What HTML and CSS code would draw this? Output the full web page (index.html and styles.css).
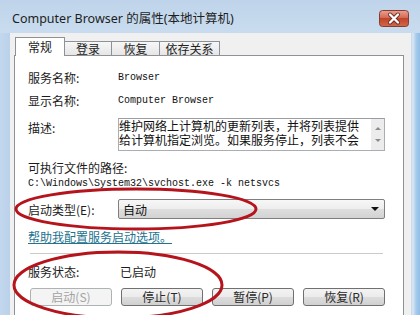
FILE: index.html
```html
<!DOCTYPE html>
<html>
<head>
  <meta charset="utf-8">
  <meta name="viewport" content="width=device-width, initial-scale=1.0"/>
  <title>Computer Browser 的属性</title>
  <link rel="stylesheet" href="styles.css">
</head>
<body>

  <div class="window">
    <div class="titlebar">
      <span class="title">Computer Browser 的属性(本地计算机)</span>
      <div class="close">
        <svg width="30" height="17" viewBox="0 0 30 17">
          <defs>
            <linearGradient id="red" x1="0" y1="0" x2="0" y2="1">
              <stop offset="0" stop-color="#e9a292"/>
              <stop offset="0.45" stop-color="#d46a55"/>
              <stop offset="0.5" stop-color="#c24328"/>
              <stop offset="1" stop-color="#cf6a4e"/>
            </linearGradient>
          </defs>
          <rect x="0.5" y="0.5" width="29" height="16" rx="3" fill="url(#red)" stroke="#8a3b2f"/>
          <path d="M11 4.5 L19 12.5 M19 4.5 L11 12.5" stroke="#6e2a22" stroke-width="4" stroke-linecap="round"/>
          <path d="M11 4.5 L19 12.5 M19 4.5 L11 12.5" stroke="#ffffff" stroke-width="2.4" stroke-linecap="round"/>
        </svg>
      </div>
    </div>

    <div class="client">
      <div class="tabs">
        <div class="tab active">常规</div>
        <div class="tab tab-login">登录</div>
        <div class="tab tab-recover">恢复</div>
        <div class="tab tab-deps">依存关系</div>
      </div>

      <div class="panel">
        <div class="field">
          <span class="label">服务名称:</span>
          <span class="mono">Browser</span>
        </div>
        <div class="field">
          <span class="label">显示名称:</span>
          <span class="mono">Computer Browser</span>
        </div>
        <div class="field field-desc">
          <span class="label label-top">描述:</span>
          <div class="desc">
            <div class="desc-text">
              <div>维护网络上计算机的更新列表，并将列表提供</div>
              <div>给计算机指定浏览。如果服务停止，列表不会</div>
            </div>
            <div class="scroll">
              <span class="arrow-up"></span>
              <span class="arrow-down"></span>
            </div>
          </div>
        </div>

        <div class="line path-label">可执行文件的路径:</div>
        <div class="line mono">C:\Windows\System32\svchost.exe -k netsvcs</div>

        <div class="field field-type">
          <span class="label">启动类型(E):</span>
          <div class="select">
            <span>自动</span>
            <span class="caret"></span>
          </div>
        </div>

        <div class="line help"><a href="#">帮助我配置服务启动选项。</a></div>

        <div class="divider"></div>

        <div class="line status">
          <span class="label">服务状态:</span>
          <span>已启动</span>
        </div>

        <div class="buttons">
          <button disabled>启动(S)</button>
          <button>停止(T)</button>
          <button>暂停(P)</button>
          <button>恢复(R)</button>
        </div>
      </div>
    </div>
  </div>

  <svg class="marks" width="420" height="315" viewBox="0 0 420 315">
    <ellipse cx="136" cy="209" rx="120" ry="20" fill="none" stroke="#b5141c" stroke-width="3"/>
    <ellipse cx="118" cy="285" rx="104" ry="33" fill="none" stroke="#b5141c" stroke-width="3"/>
  </svg>

</body>
</html>
```

FILE: styles.css
```css
* {
  box-sizing: border-box;
}
body {
  margin: 0;
  width: 420px;
  height: 315px;
  overflow: hidden;
  position: relative;
  font-family: "Noto Sans CJK SC", sans-serif;
  font-size: 12px;
  color: #1c1c1c;
}
.window {
  display: flex;
  flex-direction: column;
  height: 315px;
  background: linear-gradient(90deg, #c3d8ee 0, #b9d1ea 10px, #c3d8ed 411px, #dbe7f3 413px, #a7cbea 416px, #8fbde6 420px);
}
.titlebar {
  height: 33px;
  display: flex;
  align-items: flex-start;
  justify-content: space-between;
  padding: 0 11px 0 12px;
  background: linear-gradient(#bfd4ea, #c9dcef);
}
.title {
  margin-top: 10px;
  line-height: 18px;
  font-family: "Noto Sans", "Noto Sans CJK SC", sans-serif;
  font-size: 12.5px;
  color: #1e1e1e;
}
.close {
  margin-top: 10px;
  height: 17px;
}
.close svg {
  display: block;
}
.client {
  flex: 1;
  margin: 0 9px 0 10px;
  padding: 4px 7px 0 4px;
  background: #f0f0f0;
  display: flex;
  flex-direction: column;
  overflow: hidden;
}
.tabs {
  display: flex;
  align-items: flex-end;
  height: 19px;
  margin-bottom: -1px;
  padding-left: 1px;
  position: relative;
  z-index: 1;
}
.tab {
  height: 14px;
  margin-bottom: 1px;
  margin-left: -1px;
  border: 1px solid #8e9196;
  border-bottom: none;
  background: linear-gradient(#f7f7f7, #e6e6e6);
  text-align: center;
  line-height: 13px;
  color: #222;
}
.tab.active {
  width: 50px;
  height: 19px;
  margin-left: 0;
  margin-bottom: 0;
  background: #fff;
  line-height: 17px;
}
.tab-login {
  width: 48px;
}
.tab-recover {
  width: 49px;
}
.tab-deps {
  width: 61px;
}
.panel {
  flex: none;
  height: 300px;
  background: #fff;
  border: 1px solid #8e9196;
  padding: 10px 0 0 13px;
}
.field {
  display: flex;
  align-items: center;
  height: 23px;
}
.label {
  width: 90px;
  flex: none;
}
.mono {
  font-family: "Liberation Mono", monospace;
  font-size: 10px;
  color: #111;
}
.field-desc {
  height: auto;
  align-items: flex-start;
  margin-top: 6px;
}
.label-top {
  line-height: 16px;
  padding-top: 2px;
}
.desc {
  width: 267px;
  height: 33px;
  display: flex;
  border: 1px solid #abadb3;
  border-top-color: #9a9ca2;
}
.desc-text {
  flex: 1;
  line-height: 14px;
  white-space: nowrap;
  color: #111;
}
.scroll {
  width: 13px;
  display: flex;
  flex-direction: column;
  justify-content: space-around;
  align-items: center;
  background: #ececec;
  padding: 3px 0;
}
.arrow-up,
.arrow-down {
  width: 0;
  height: 0;
  border-left: 3px solid transparent;
  border-right: 3px solid transparent;
}
.arrow-up {
  border-bottom: 3px solid #8b8b8b;
}
.arrow-down {
  border-top: 3px solid #8b8b8b;
}
.line {
  line-height: 16px;
}
.path-label {
  margin-top: 9px;
}
.field-type {
  height: 20px;
  margin-top: 7px;
}
.select {
  width: 267px;
  height: 20px;
  display: flex;
  align-items: center;
  justify-content: space-between;
  padding: 0 5px 0 4px;
  border: 1px solid #7f7f7f;
  border-radius: 2px;
  background: linear-gradient(#f7f7f7, #ededed 50%, #dedede 51%, #d3d3d3);
  color: #111;
}
.caret {
  width: 0;
  height: 0;
  border-left: 4px solid transparent;
  border-right: 4px solid transparent;
  border-top: 4px solid #111;
}
.help {
  margin-top: 10px;
}
.help a {
  color: #23728f;
  text-decoration: underline;
}
.divider {
  width: 353px;
  margin: 8px 0 0 2px;
  border-top: 1px solid #cbcbcb;
}
.status {
  display: flex;
  margin-top: 10px;
}
.status .label {
  width: 92px;
}
.buttons {
  display: flex;
  gap: 9px;
  margin: 8px 0 0 2px;
}
button {
  width: 82px;
  height: 18px;
  padding: 0;
  border: 1px solid #707070;
  border-radius: 3px;
  background: linear-gradient(#f3f3f3, #ebebeb 50%, #dddddd 51%, #d0d0d0);
  font-family: "Noto Sans CJK SC", sans-serif;
  font-size: 12px;
  line-height: 16px;
  color: #2a2a2a;
}
button:disabled {
  border-color: #adb2b5;
  background: #f4f4f4;
  color: #a3a3a3;
}
.marks {
  position: absolute;
  top: 0;
  left: 0;
  pointer-events: none;
}
```
